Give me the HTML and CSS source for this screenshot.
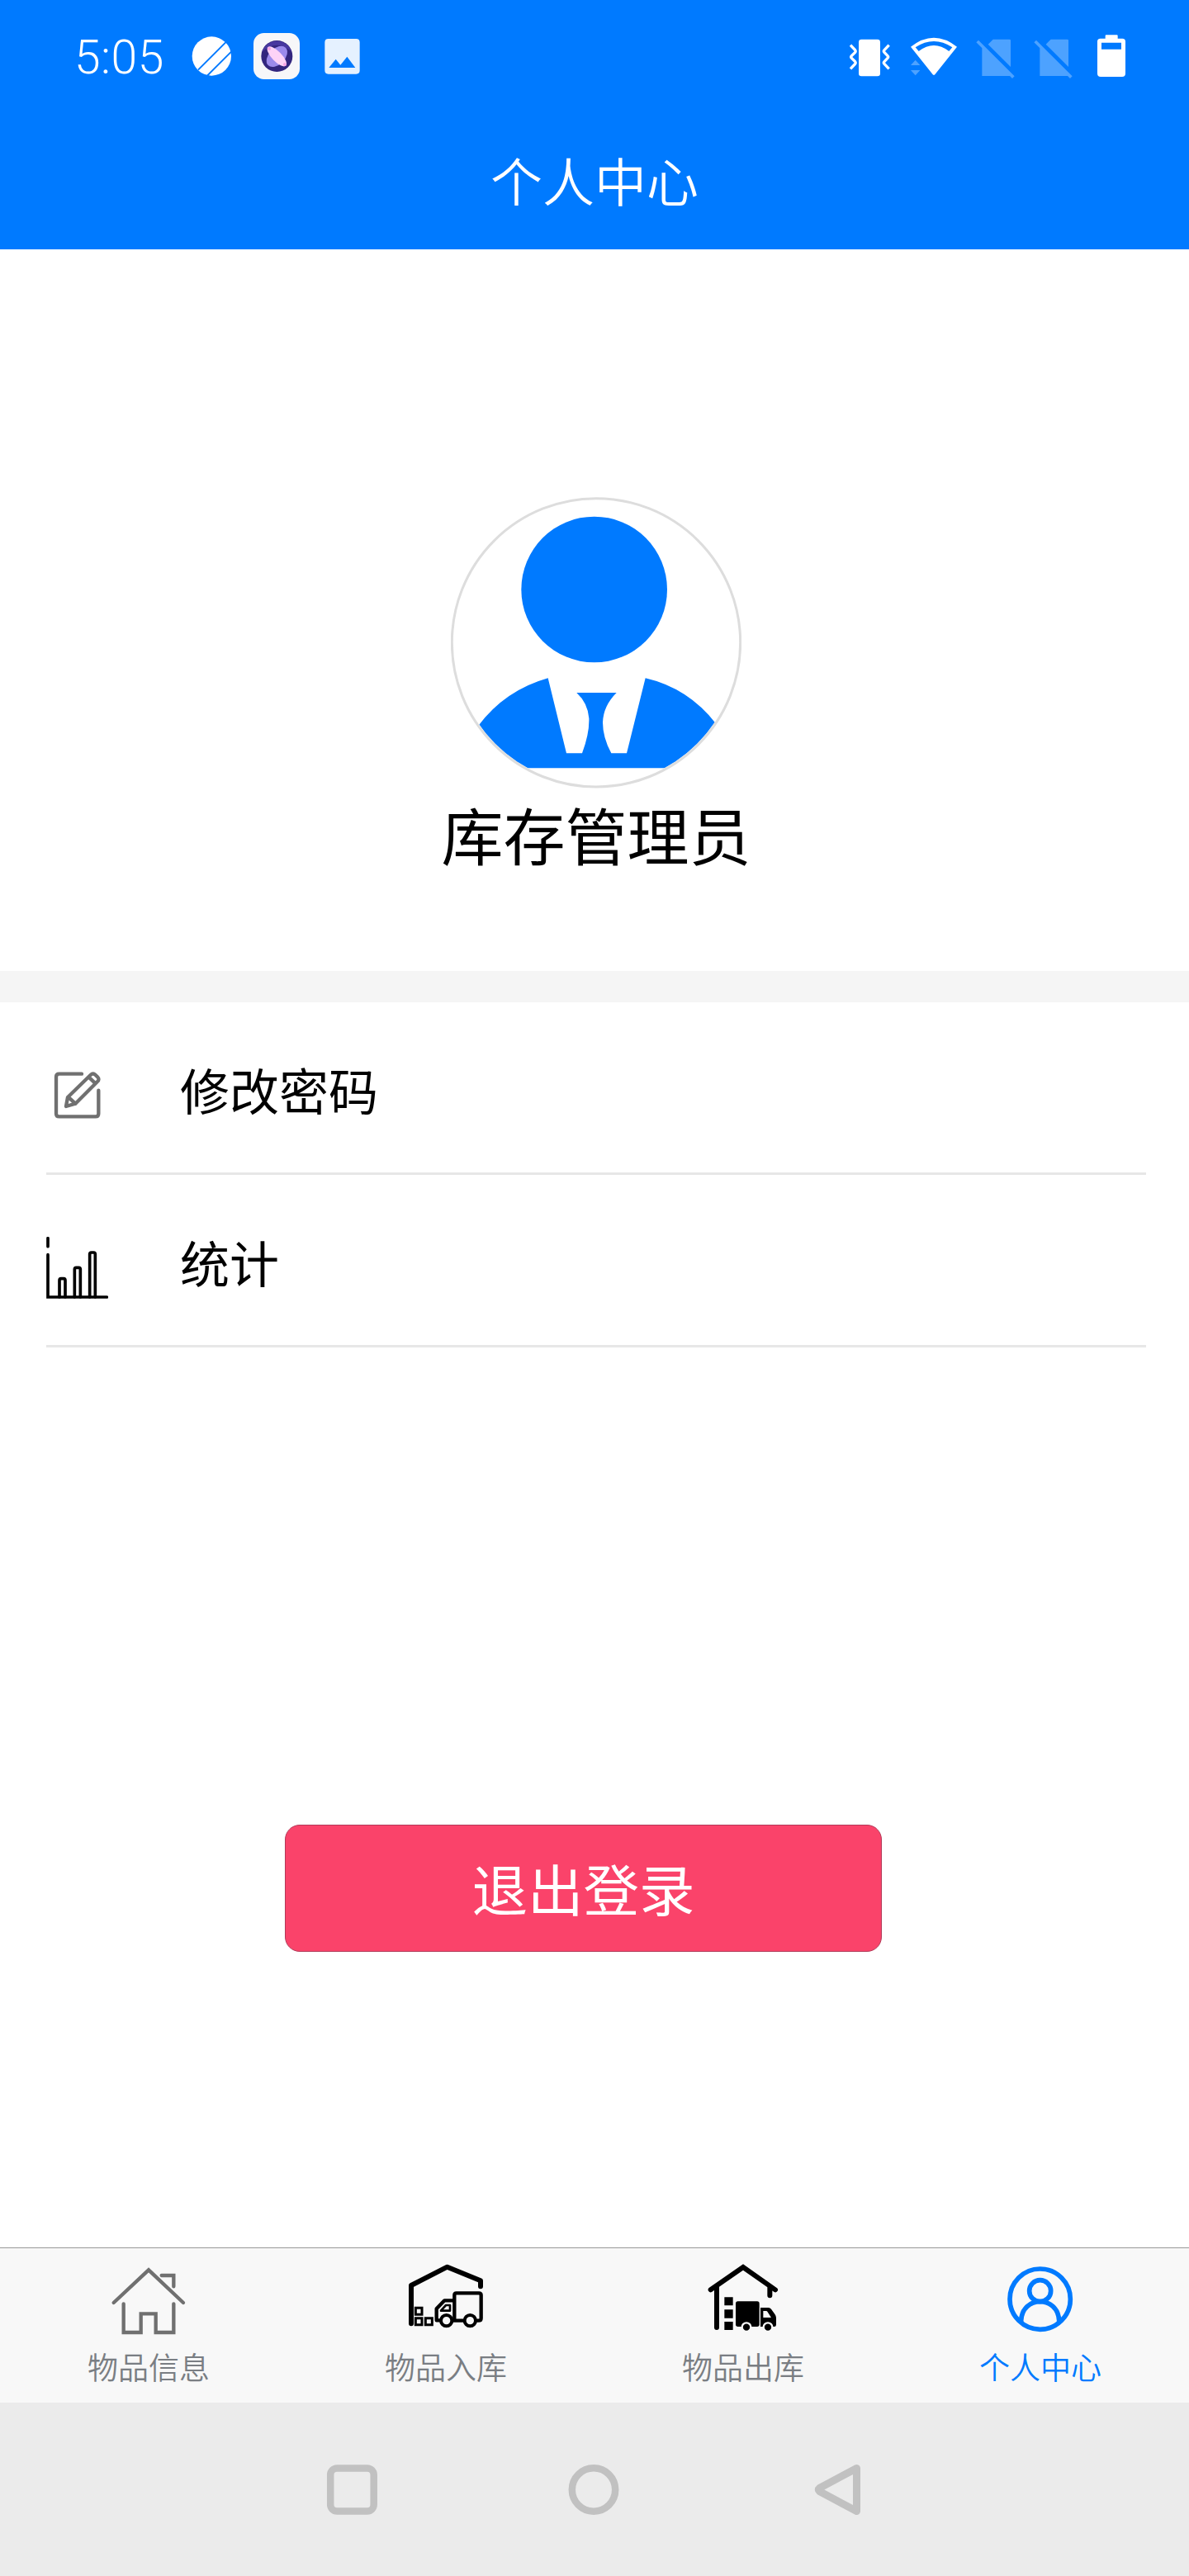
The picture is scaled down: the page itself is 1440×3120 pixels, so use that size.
FILE: index.html
```html
<!DOCTYPE html>
<html lang="zh-CN">
<head>
  <meta charset="UTF-8">
  <meta name="viewport" content="width=device-width, initial-scale=1.0">
  <title>个人中心</title>
  <link rel="stylesheet" href="styles.css">
</head>
<body>
  <header class="header">
    <div class="status-bar">
      <span class="time">5:05</span>
      <div class="status-left">
        <svg width="49" height="60" viewBox="486 54 147 180">
          <circle cx="559" cy="144" r="71" fill="#fff"/>
          <path d="M510 194 L612 92 M542 216 L634 124" stroke="#007aff" stroke-width="6"/>
        </svg>
        <svg width="58" height="60" viewBox="708 54 174 180">
          <rect x="711" y="60" width="168" height="168" rx="38" fill="#f7f7f9"/>
          <circle cx="796" cy="144" r="57" fill="#33267e"/>
          <path d="M742 128 A57 57 0 0 1 850 128 Q796 80 742 128" fill="#4838a0"/>
          <ellipse cx="796" cy="145" rx="45" ry="29" transform="rotate(-45 796 145)" fill="#9b8aeb"/>
          <ellipse cx="796" cy="145" rx="47" ry="18" transform="rotate(46 796 145)" fill="#fdd3f7"/>
          <circle cx="768" cy="117" r="6" fill="#f5a5e4"/>
          <circle cx="825" cy="174" r="6" fill="#f5a5e4"/>
        </svg>
        <svg class="photo" width="45" height="60" viewBox="966 54 135 180">
          <path fill="#e5f1ff" fill-rule="evenodd" d="M983 81H1084Q1097 81 1097 94V196Q1097 209 1084 209H983Q970 209 970 196V94Q970 81 983 81Z M985 186H1081L1051 146L1027 176L1010 155Z"/>
        </svg>
      </div>
      <div class="status-right">
        <svg width="51" height="60" viewBox="84 54 153 180">
          <rect x="120" y="83" width="78" height="134" rx="10" fill="#fff"/>
          <path d="M90 104L107 122Q110 126 107 130L94 143Q90 147 94 151L107 164Q110 168 107 172L90 190 M230 104L213 122Q209 126 213 130L225 143Q229 147 225 151L213 164Q209 168 213 172L230 190" fill="none" stroke="#fff" stroke-width="10"/>
        </svg>
        <svg width="57" height="60" viewBox="306 54 171 180">
          <path fill="#fff" fill-rule="evenodd" d="M309 110Q393 44 477 110L398 209Q393 216 388 209Z M326 112L338 126Q393 84 448 126L460 112Q393 68 326 112Z"/>
          <path fill="#4da2ff" d="M309 177L326 158L343 177Z M309 195H343L326 214Z"/>
        </svg>
        <svg width="47" height="60" viewBox="546 54 141 180">
          <path fill="#4da2ff" d="M608 83H668Q672 83 672 87V183L590 101Z M547 94L555 86L686 217L678 225L669 216H568V115Z"/>
        </svg>
        <svg width="47" height="60" viewBox="546 54 141 180">
          <path fill="#4da2ff" d="M608 83H668Q672 83 672 87V183L590 101Z M547 94L555 86L686 217L678 225L669 216H568V115Z"/>
        </svg>
        <svg class="battery" width="36" height="60" viewBox="984 54 108 180">
          <path fill="#fff" fill-rule="evenodd" d="M1016 70Q1016 67 1019 67H1058Q1061 67 1061 70V80H1078Q1089 80 1089 91V207Q1089 219 1077 219H999Q987 219 987 207V91Q987 80 998 80H1016Z M1002 95V119H1074V95Z"/>
        </svg>
      </div>
    </div>
    <h1 class="title">个人中心</h1>
  </header>

  <main class="content">
    <section class="profile">
      <div class="avatar">
        <svg width="352" height="353" viewBox="138 66 1056 1059">
          <defs>
            <clipPath id="round"><circle cx="666" cy="595" r="519"/></clipPath>
          </defs>
          <g fill="#007aff" clip-path="url(#round)">
            <circle cx="659" cy="402" r="265"/>
            <path d="M170 1051V1000Q200 945 238 897Q335 768 491 724L558 997H615Q642 925 640 870Q636 815 595 777H740Q692 825 690 885Q690 940 721 997H777L845 724Q1000 760 1100 888Q1140 940 1170 1000V1051Z"/>
          </g>
          <circle cx="666" cy="595" r="524" fill="none" stroke="#ddd" stroke-width="9"/>
        </svg>
      </div>
      <p class="name">库存管理员</p>
    </section>

    <ul class="menu">
      <li class="menu-item">
        <svg class="menu-icon" width="75" height="75" viewBox="168 387 225 225">
          <g fill="none" stroke="#707070" stroke-width="13" stroke-linecap="round" stroke-linejoin="round">
            <path d="M297 422H215Q204 422 204 433V566Q204 577 215 577H347Q358 577 358 566V482"/>
            <path d="M240 540L246 507L329 426Q338 417 347 426L354 433Q363 442 354 450L274 530Z M322 433L347 457 M251 509L274 530"/>
          </g>
        </svg>
        <span>修改密码</span>
      </li>
      <li class="menu-item">
        <svg class="menu-icon" width="75" height="75" viewBox="168 1014 225 225">
          <g fill="none" stroke="#000" stroke-width="11" stroke-linecap="round">
            <path d="M174 1019V1049 M174 1079V1233H388"/>
            <path d="M216 1233V1172Q216 1166 222 1166H231Q237 1166 237 1172V1233 M271 1233V1132Q271 1126 277 1126H286Q292 1126 292 1132V1233 M326 1233V1077Q326 1071 332 1071H340Q346 1071 346 1077V1233"/>
          </g>
        </svg>
        <span>统计</span>
      </li>
    </ul>

    <button class="logout">退出登录</button>
  </main>

  <nav class="tab-bar">
    <a class="tab">
      <svg width="90" height="90" viewBox="135 120 270 270">
        <g fill="none" stroke="#707070" stroke-width="13" stroke-linecap="round">
          <path d="M143 267L270 148L396 267"/>
          <path d="M317 168H361V208 M179 271V375H242V307H296V375H361V271"/>
        </g>
      </svg>
      <span>物品信息</span>
    </a>
    <a class="tab">
      <svg width="90" height="90" viewBox="165 120 270 270">
        <g fill="none" stroke="#000" stroke-linecap="round" stroke-linejoin="round">
          <path d="M174 343V204L305 137L426 187V208" stroke-width="18"/>
          <path d="M331 331V239Q331 232 338 232H420Q428 232 428 239V323Q428 332 419 332H411 M362 332H328 M277 331H266V289L295 259H326" stroke-width="13"/>
          <path d="M282 296L300 276H315V296Z" stroke-width="8"/>
        </g>
        <g fill="#f8f8f8" stroke="#000">
          <circle cx="302" cy="332" r="20" stroke-width="12"/>
          <circle cx="388" cy="332" r="20" stroke-width="12"/>
          <path d="M190 286H213V310H190Z M190 323H213V347H190Z M226 323H250V347H226Z" stroke-width="9"/>
        </g>
      </svg>
      <span>物品入库</span>
    </a>
    <a class="tab">
      <svg width="90" height="90" viewBox="165 120 270 270">
        <path d="M182 220L300 138L417 220 M204 208V357 M397 210V241" fill="none" stroke="#000" stroke-width="18" stroke-linecap="round"/>
        <path d="M232 247H263V277H232Z M232 292H263V323H232Z M232 336H263V366H232Z"/>
        <rect x="273" y="262" width="86" height="92" rx="8"/>
        <path fill-rule="evenodd" d="M363 285H392Q398 285 402 290L416 310Q420 316 420 322V347Q420 354 413 354H363Z M373 297V321H402L388 299Q387 297 384 297Z"/>
        <circle cx="312" cy="356" r="16" stroke="#f8f8f8" stroke-width="7"/>
        <circle cx="390" cy="356" r="16" stroke="#f8f8f8" stroke-width="7"/>
      </svg>
      <span>物品出库</span>
    </a>
    <a class="tab active">
      <svg width="90" height="90" viewBox="165 120 270 270">
        <g fill="none" stroke="#007aff" stroke-width="17">
          <circle cx="299" cy="254" r="110"/>
          <circle cx="299" cy="224" r="39"/>
          <path d="M230 338V332C234 240 364 240 368 332V338"/>
        </g>
      </svg>
      <span>个人中心</span>
    </a>
  </nav>

  <div class="system-nav">
    <svg width="66" height="62" viewBox="0 0 66 62">
      <rect x="7.2" y="5.5" width="52.5" height="52" rx="8" fill="none" stroke="#c1c1c1" stroke-width="8.5"/>
    </svg>
    <svg width="66" height="62" viewBox="0 0 66 62">
      <circle cx="32" cy="31.5" r="26.200" fill="none" stroke="#c1c1c1" stroke-width="8.5"/>
    </svg>
    <svg width="66" height="62" viewBox="0 0 66 62">
      <path d="M56.500 5.500V57.500L11.500 33.500Q9 31.500 11.500 29.500Z" fill="none" stroke="#c1c1c1" stroke-width="9" stroke-linejoin="round"/>
    </svg>
  </div>
</body>
</html>
```

FILE: styles.css
```css
* {
  box-sizing: border-box;
}
body {
  display: flex;
  flex-direction: column;
  width: 1440px;
  height: 3120px;
  margin: 0;
  background-color: #fff;
  color: #000;
  font-family: "Noto Sans CJK SC", sans-serif;
}
svg {
  display: block;
  flex: none;
}
.header {
  height: 302px;
  background-color: #007aff;
  color: #fff;
}
.status-bar {
  display: flex;
  align-items: center;
  height: 136px;
  padding: 0 76px 0 90px;
}
.time {
  width: 142px;
  padding-top: 3px;
  font-family: Roboto, sans-serif;
  font-size: 57px;
  font-weight: 300;
  line-height: 60px;
  letter-spacing: 0.5px;
}
.status-left, .status-right {
  display: flex;
}
.status-left {
  gap: 25px;
}
.status-right {
  gap: 23px;
  margin-left: auto;
}
.photo {
  margin-left: 3px;
}
.battery {
  margin-left: 6px;
}
.title {
  margin: 0;
  font-size: 63px;
  font-weight: 350;
  line-height: 162px;
  text-align: center;
}
.content {
  height: 2420px;
}
/* 头像和名称 */
.profile {
  display: flex;
  flex-direction: column;
  align-items: center;
  height: 912px;
  padding-top: 300px;
  border-bottom: 38px solid #f5f5f5;
}
.avatar {
  margin-left: 4px;
}
.name {
  margin: 0 0 0 4px;
  font-size: 75px;
  line-height: 110px;
}
.menu {
  margin: 0;
  padding: 0 52px 0 56px;
  list-style: none;
}
.menu-item {
  display: flex;
  align-items: center;
  height: 209px;
  border-bottom: 3px solid #e7e7e7;
  font-size: 60px;
  line-height: 90px;
}
.menu-item span {
  margin: 3px 0 0 87px;
}
.menu-icon {
  margin-top: 19px;
}
.logout {
  display: block;
  width: 723px;
  height: 154px;
  margin: 578px 0 0 345px;
  padding: 0 0 4px;
  border: 1px solid #b23a58;
  border-radius: 18px;
  background-color: #fa436a;
  color: #fff;
  font-family: inherit;
  font-size: 67.5px;
}
/* 底部导航 */
.tab-bar {
  display: flex;
  height: 188px;
  border-top: 1px solid #999;
  background-color: #f8f8f8;
}
.tab {
  display: flex;
  flex: 1;
  flex-direction: column;
  align-items: center;
  padding-top: 17px;
  color: #7a7e83;
  font-size: 37px;
  font-weight: 350;
  line-height: 54px;
}
.tab svg {
  margin-bottom: 9px;
  overflow: visible;
}
.tab.active {
  color: #007aff;
}
.system-nav {
  display: flex;
  justify-content: center;
  align-items: center;
  gap: 228px;
  height: 210px;
  background-color: #ebebeb;
}
```
